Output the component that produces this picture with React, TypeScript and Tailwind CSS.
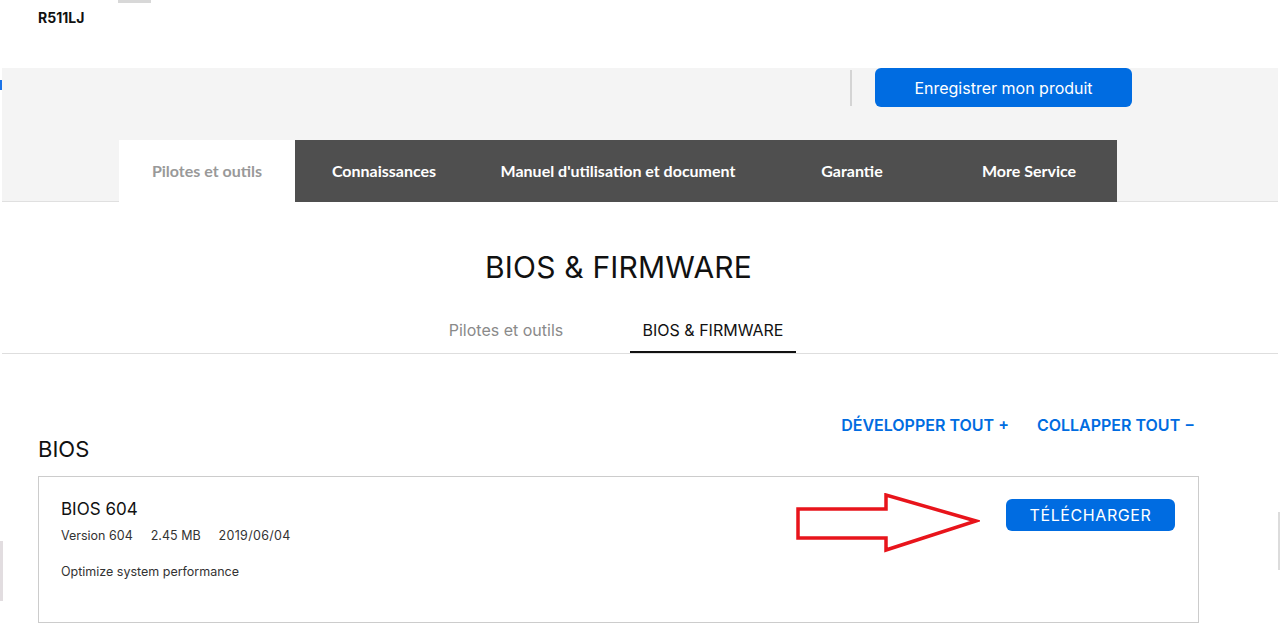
import { ReactNode } from "react"

const body = { fontFamily: "Inter, 'Noto Sans', sans-serif" }
const lato = { fontFamily: "Lato, 'Noto Sans', sans-serif" }

function TopTab({ children, active, className }: { children: ReactNode; active?: boolean; className?: string }) {
  return (
    <div
      className={
        "flex h-full items-center justify-center text-[16px] font-bold " +
        (active ? "bg-white text-[#999999] " : "bg-[#4f4f4f] text-white ") +
        (className ?? "")
      }
      style={lato}
    >
      {children}
    </div>
  )
}

function Arrow() {
  return (
    <svg className="absolute left-[757px] top-[16px]" width="184" height="62" viewBox="0 0 184 62">
      <polygon
        points="2,16 90,16 90,2 180,28 90,57 90,45 2,45"
        fill="none"
        stroke="#e8141b"
        strokeWidth="3.5"
        strokeLinejoin="miter"
      />
    </svg>
  )
}

export default function App() {
  return (
    <div className="relative h-[638px] w-[1280px] overflow-hidden bg-white text-[#111]" style={body}>
      {/* leftover bits of the page above */}
      <div className="absolute left-[118px] top-0 h-[3px] w-[33px] bg-[#d8d8d8]" />
      <div className="absolute left-0 top-[80px] h-[10px] w-[2px] bg-[#1a73e8]" />
      <div className="absolute right-0 top-[512px] h-[58px] w-[2px] bg-[#dcdcdc]" />
      <div className="absolute left-0 top-[541px] h-[60px] w-[3px] bg-[#e2dde0]" />

      <div className="px-[38px] pt-[9px] text-[14px] font-bold leading-[17px]">R511LJ</div>

      <div className="mx-[2px] mt-[42px] h-[134px] border-b border-[#e0e0e0] bg-[#f4f4f4]">
        <div className="flex h-[39px] items-center">
          <div className="ml-[848px] h-[36px] w-[2px] bg-[#d4d4d4]" />
          <button className="ml-[23px] flex h-[39px] w-[257px] items-center justify-center self-start rounded-[6px] bg-[#006ce1] text-[16px] text-white">
            Enregistrer mon produit
          </button>
        </div>
        <div className="mt-[33px] flex h-[62px] pl-[117px]">
          <TopTab active className="w-[176px]">Pilotes et outils</TopTab>
          <TopTab className="w-[178px]">Connaissances</TopTab>
          <TopTab className="w-[290px]">Manuel d'utilisation et document</TopTab>
          <TopTab className="w-[178px]">Garantie</TopTab>
          <TopTab className="w-[176px]">More Service</TopTab>
        </div>
      </div>

      <h1 className="mx-[38px] mt-[47px] w-[1161px] text-center text-[30px] font-normal leading-[36px] tracking-[0.2px]">
        BIOS &amp; FIRMWARE
      </h1>

      <div className="mx-[2px] mt-[32px] border-b border-[#dedede]">
        <div className="mx-[36px] flex w-[1161px] pl-[378px]">
          <div className="flex h-[36px] w-[180px] items-start justify-center pt-[1px] text-[16px] text-[#8a8a8a]">Pilotes et outils</div>
          <div className="ml-[34px] flex h-[36px] w-[166px] items-start justify-center border-b-[2px] border-[#111] pt-[1px] text-[16px]">
            BIOS &amp; FIRMWARE
          </div>
        </div>
      </div>

      <div className="mx-[38px] mt-[61px] w-[1161px]">
        <div className="flex justify-end gap-[28px] pr-[4px] text-[16px] font-semibold leading-[20px] text-[#006ce1]">
          <span>DÉVELOPPER TOUT +</span>
          <span>COLLAPPER TOUT −</span>
        </div>
        <h2 className="mt-[1px] text-[22px] leading-[26px]">BIOS</h2>
        <div className="relative mt-[14px] h-[147px] border border-[#cccccc] px-[22px] pt-[22px]">
          <div className="flex items-start justify-between">
            <div>
              <div className="text-[17px] leading-[20px]">BIOS 604</div>
              <div className="mt-[9px] flex gap-[18px] text-[12.5px] leading-[16px] text-[#333]">
                <span>Version 604</span>
                <span>2.45 MB</span>
                <span className="tracking-[0.3px]">2019/06/04</span>
              </div>
              <div className="mt-[20px] text-[12.5px] leading-[16px] text-[#333]">Optimize system performance</div>
            </div>
            <button className="mr-[1px] flex h-[32px] w-[169px] items-center justify-center rounded-[6px] bg-[#006ce1] text-[16px] tracking-[0.6px] text-white">
              TÉLÉCHARGER
            </button>
          </div>
          <Arrow />
        </div>
      </div>
    </div>
  )
}
